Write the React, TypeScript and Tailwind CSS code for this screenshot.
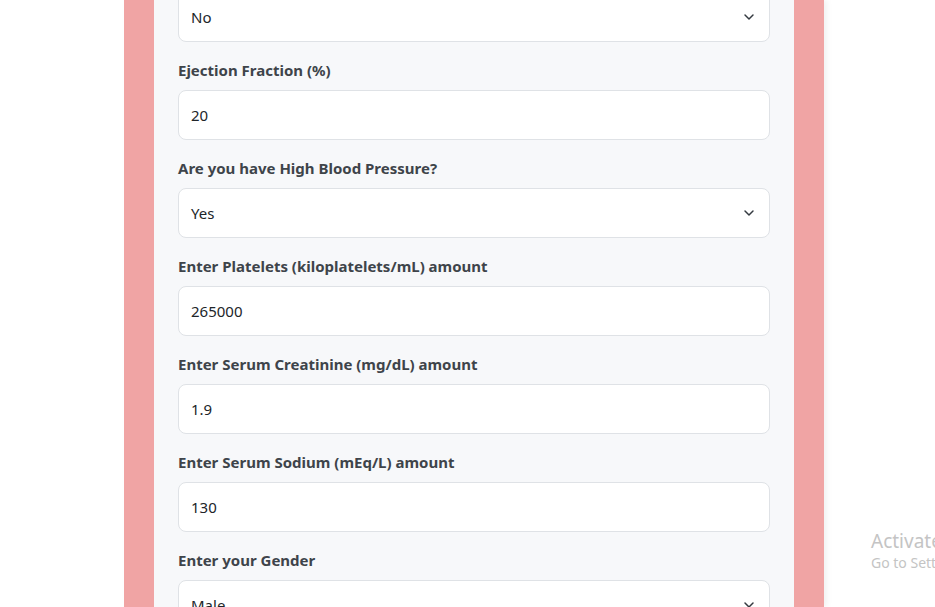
import { ChevronDown } from 'lucide-react';

type Field = {
  label?: string;
  value: string;
  select?: boolean;
};

const fields: Field[] = [
  { value: 'No', select: true },
  { label: 'Ejection Fraction (%)', value: '20' },
  { label: 'Are you have High Blood Pressure?', value: 'Yes', select: true },
  { label: 'Enter Platelets (kiloplatelets/mL) amount', value: '265000' },
  { label: 'Enter Serum Creatinine (mg/dL) amount', value: '1.9' },
  { label: 'Enter Serum Sodium (mEq/L) amount', value: '130' },
  { label: 'Enter your Gender', value: 'Male', select: true },
];

function FormField({ label, value, select }: Field) {
  return (
    <div className="flex flex-col">
      {label && (
        <label className="mb-[10px] text-[15px] font-bold leading-[20px] text-[#3e444a]">
          {label}
        </label>
      )}
      <div className="flex h-[50px] items-center justify-between rounded-lg border border-[#dfe2e6] bg-white pl-3 pr-3 text-[15px] text-[#212529]">
        <span>{value}</span>
        {select && <ChevronDown className="h-4 w-4 text-[#343a40]" strokeWidth={2.2} />}
      </div>
    </div>
  );
}

export default function App() {
  return (
    <div
      className="relative h-[607px] w-[935px] overflow-hidden bg-white"
      style={{ fontFamily: '"Noto Sans", "Open Sans", sans-serif' }}
    >
      <div className="ml-[124px] flex h-full w-[700px] bg-[#f0a4a4] px-[30px] shadow-[3px_0_6px_rgba(0,0,0,0.06)]">
        <div className="h-full w-full bg-[#f7f8fa] px-6">
          <div className="-mt-2 flex flex-col gap-[18px]">
            {fields.map((f, i) => (
              <FormField key={i} {...f} />
            ))}
          </div>
        </div>
      </div>

      <div className="absolute left-[871px] top-[528px] whitespace-nowrap text-[#c4c4c4]">
        <div className="text-[19px] leading-[26px]">Activate Windows</div>
        <div className="text-[14px] leading-[18px]">Go to Settings to activate Windows.</div>
      </div>
    </div>
  );
}
